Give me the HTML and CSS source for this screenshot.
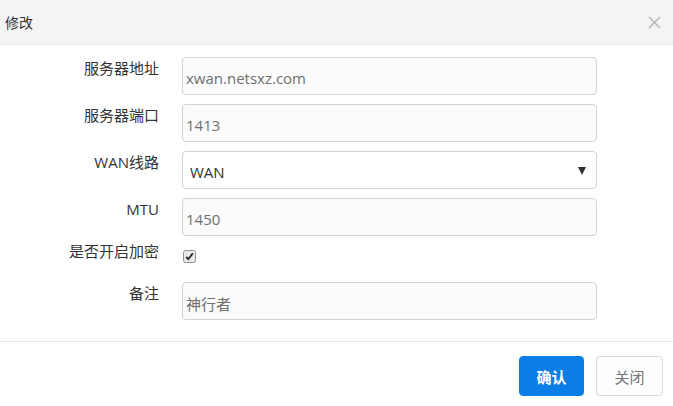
FILE: index.html
```html
<!DOCTYPE html>
<html lang="zh">
<head>
<meta charset="utf-8">
<title>修改</title>
<link rel="stylesheet" href="styles.css">
</head>
<body>
<div class="dialog">
  <div class="dlg-head">
    <span class="dlg-title">修改</span>
    <span class="dlg-close">
      <svg width="13" height="13" viewBox="0 0 13 13"><path d="M1 1L12 12M12 1L1 12" stroke="#b8b8b8" stroke-width="1.6" fill="none"/></svg>
    </span>
  </div>
  <form class="dlg-body">
    <div class="row">
      <label class="lbl">服务器地址</label>
      <input class="field" type="text" value="xwan.netsxz.com" readonly>
    </div>
    <div class="row">
      <label class="lbl">服务器端口</label>
      <input class="field" type="text" value="1413" readonly>
    </div>
    <div class="row">
      <label class="lbl">WAN线路</label>
      <div class="select-wrap">
        <select class="field select"><option>WAN</option></select>
      </div>
    </div>
    <div class="row">
      <label class="lbl">MTU</label>
      <input class="field" type="text" value="1450" readonly>
    </div>
    <div class="row row-check">
      <label class="lbl">是否开启加密</label>
      <span class="check">
        <svg width="13" height="13" viewBox="0 0 13 13"><rect x="0.5" y="0.5" width="12" height="12" rx="2" fill="#e9e9e9" stroke="#8f8f8f"/><path d="M3.2 6.8L5.3 9.2L9.8 3.4" stroke="#222" stroke-width="1.8" fill="none"/></svg>
      </span>
    </div>
    <div class="row">
      <label class="lbl">备注</label>
      <input class="field" type="text" value="神行者" readonly>
    </div>
  </form>
  <div class="dlg-foot">
    <button class="btn btn-primary" type="button">确认</button>
    <button class="btn btn-default" type="button">关闭</button>
  </div>
</div>
</body>
</html>
```
FILE: styles.css
```css
html, body {
  margin: 0;
  padding: 0;
  background: #fff;
}
body {
  font-family: "Open Sans", "Noto Sans CJK SC", sans-serif;
  font-size: 14px;
  color: #333;
}
.dialog {
  width: 673px;
  height: 406px;
  display: flex;
  flex-direction: column;
}
.dlg-head {
  height: 44px;
  background: #f4f4f4;
  border-bottom: 1px solid #e6e6e6;
  display: flex;
  align-items: center;
  justify-content: space-between;
  padding: 0 12px 0 5px;
}
.dlg-title {
  font-size: 14px;
  color: #333;
}
.dlg-close {
  display: flex;
  width: 13px;
  height: 13px;
}
.dlg-body {
  margin: 0;
  padding: 12px 0 21px 0;
  display: flex;
  flex-direction: column;
  gap: 9px;
  border-bottom: 1px solid #e6e6e6;
}
.row {
  display: flex;
  align-items: flex-start;
}
.lbl {
  width: 159px;
  text-align: right;
  line-height: 23px;
  font-size: 15px;
  color: #333;
  flex: none;
}
.field {
  box-sizing: border-box;
  margin: 0 0 0 23px;
  width: 415px;
  height: 38px;
  border: 1px solid #d2d2d2;
  border-radius: 4px;
  background: #fbfbfb;
  padding: 4px 0 0 3px;
  font-family: "Open Sans", "Noto Sans CJK SC", sans-serif;
  font-size: 15px;
  color: #6f6f6f;
  outline: none;
}
.select-wrap {
  position: relative;
  display: flex;
}
.select {
  appearance: none;
  -webkit-appearance: none;
  background: #fff;
  color: #333;
  padding: 3px 0 0 7px;
}
.select-wrap::after {
  content: "";
  position: absolute;
  right: 11px;
  top: 16px;
  border-left: 4px solid transparent;
  border-right: 4px solid transparent;
  border-top: 8px solid #333;
}
.row-check {
  margin-top: -5px;
  height: 33px;
}
.check {
  margin: 10px 0 0 24px;
  display: flex;
}
.dlg-foot {
  display: flex;
  justify-content: flex-end;
  gap: 12px;
  padding: 14px 10px 0 0;
}
.btn {
  height: 40px;
  border-radius: 4px;
  font-family: "Open Sans", "Noto Sans CJK SC", sans-serif;
  font-size: 15px;
  padding: 0;
  cursor: pointer;
}
.btn-primary {
  width: 65px;
  background: #0a7ee6;
  border: 1px solid #0a7ee6;
  color: #fff;
  font-weight: bold;
}
.btn-default {
  width: 67px;
  background: #fdfdfd;
  border: 1px solid #d8dde3;
  color: #777;
}
```
